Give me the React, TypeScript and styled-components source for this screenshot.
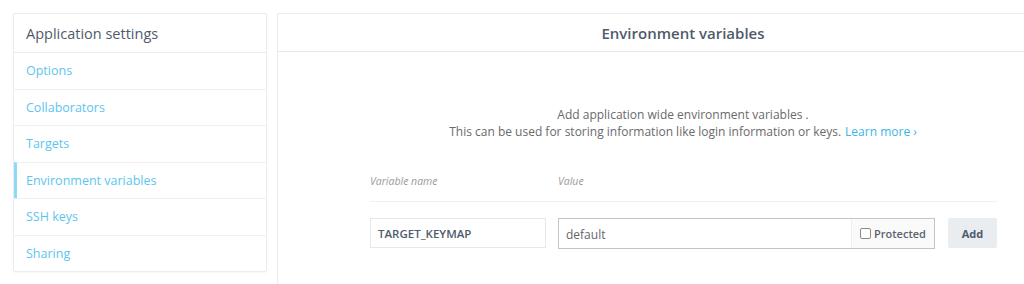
import React from "react";
import styled, { createGlobalStyle } from "styled-components";

const GlobalStyle = createGlobalStyle`
  html, body {
    margin: 0;
    background: #ffffff;
    overflow: hidden;
  }
  body {
    font-family: "Open Sans", "Liberation Sans", sans-serif;
    color: #4a5568;
  }
`;

const Page = styled.div`
  display: flex;
  align-items: flex-start;
  gap: 10px;
  padding: 13px 0 0 13px;
  width: 1200px;
`;

const Sidebar = styled.nav`
  width: 254px;
  flex: none;
  border: 1px solid #eaedef;
  border-radius: 2px;
  box-shadow: 0 1px 2px rgba(0, 0, 0, 0.04);
  box-sizing: border-box;
`;

const SidebarTitle = styled.div`
  height: 38px;
  display: flex;
  align-items: center;
  padding-left: 12px;
  font-size: 14.5px;
  color: #4f5b6c;
  border-bottom: 1px solid #eaedef;
`;

const NavItem = styled.a<{ $active?: boolean }>`
  display: flex;
  align-items: center;
  height: 35.5px;
  padding-left: ${(p) => (p.$active ? "9px" : "12px")};
  border-left: ${(p) => (p.$active ? "3px solid #8fd8f6" : "none")};
  font-size: 12.5px;
  color: #5cc6ef;
  text-decoration: none;
  & + & {
    border-top: 1px solid #eef0f2;
  }
`;

const Main = styled.section`
  width: 812px;
  flex: none;
  height: 300px;
  border: 1px solid #eaedef;
  border-radius: 2px;
  box-sizing: border-box;
`;

const MainHeader = styled.h2`
  margin: 0;
  height: 37px;
  display: flex;
  align-items: center;
  justify-content: center;
  font-size: 15px;
  font-weight: 600;
  color: #4f5b6c;
  border-bottom: 1px solid #e6e9eb;
`;

const Intro = styled.p`
  margin: 54px 0 0;
  text-align: center;
  font-size: 12px;
  line-height: 17px;
  color: #6a6a6a;
`;

const LearnMore = styled.a`
  color: #3db4e6;
  text-decoration: none;
  margin-left: 4px;
`;

const Form = styled.div`
  padding: 0 91px 0 92px;
  margin-top: 34px;
`;

const Columns = styled.div`
  display: grid;
  grid-template-columns: 176px 377px 1fr;
  column-gap: 12px;
`;

const Labels = styled(Columns)`
  padding-bottom: 13px;
  border-bottom: 1px solid #eef0f2;
`;

const Label = styled.span`
  font-size: 10.5px;
  font-style: italic;
  color: #9a9a9a;
`;

const Row = styled(Columns)`
  margin-top: 16px;
  align-items: start;
`;

const NameField = styled.div`
  height: 30px;
  box-sizing: border-box;
  border: 1px solid #e6e9eb;
  display: flex;
  align-items: center;
  padding-left: 7px;
  font-size: 11.5px;
  font-weight: 600;
  color: #4f5b6c;
`;

const ValueField = styled.div`
  height: 31px;
  box-sizing: border-box;
  border: 1px solid #c4c4c4;
  display: flex;
  align-items: stretch;
`;

const ValueText = styled.div`
  flex: 1;
  display: flex;
  align-items: center;
  padding: 2px 0 0 7px;
  font-size: 12px;
  color: #666666;
`;

const ProtectedBox = styled.label`
  width: 83px;
  display: flex;
  align-items: center;
  gap: 3px;
  padding-left: 8px;
  box-sizing: border-box;
  background: #fafafa;
  border-left: 1px solid #eeeeee;
  font-size: 11px;
  font-weight: 600;
  color: #5a6170;
`;

const CheckBox = styled.span`
  width: 9px;
  height: 9px;
  border: 1px solid #8a8a8a;
  border-radius: 2px;
  background: #ffffff;
`;

const AddButton = styled.button`
  justify-self: end;
  width: 49px;
  height: 30px;
  border: none;
  border-radius: 2px;
  background: #e9edf0;
  font-family: inherit;
  font-size: 11px;
  font-weight: 700;
  color: #4f5b6c;
  padding: 0;
`;

const navItems = [
  "Options",
  "Collaborators",
  "Targets",
  "Environment variables",
  "SSH keys",
  "Sharing",
];

export default function App() {
  return (
    <>
      <GlobalStyle />
      <Page>
        <Sidebar>
          <SidebarTitle>Application settings</SidebarTitle>
          {navItems.map((item) => (
            <NavItem key={item} $active={item === "Environment variables"}>
              {item}
            </NavItem>
          ))}
        </Sidebar>
        <Main>
          <MainHeader>Environment variables</MainHeader>
          <Intro>
            Add application wide environment variables .
            <br />
            This can be used for storing information like login information or
            keys.
            <LearnMore>Learn more ›</LearnMore>
          </Intro>
          <Form>
            <Labels>
              <Label>Variable name</Label>
              <Label>Value</Label>
            </Labels>
            <Row>
              <NameField>TARGET_KEYMAP</NameField>
              <ValueField>
                <ValueText>default</ValueText>
                <ProtectedBox>
                  <CheckBox />
                  Protected
                </ProtectedBox>
              </ValueField>
              <AddButton>Add</AddButton>
            </Row>
          </Form>
        </Main>
      </Page>
    </>
  );
}
